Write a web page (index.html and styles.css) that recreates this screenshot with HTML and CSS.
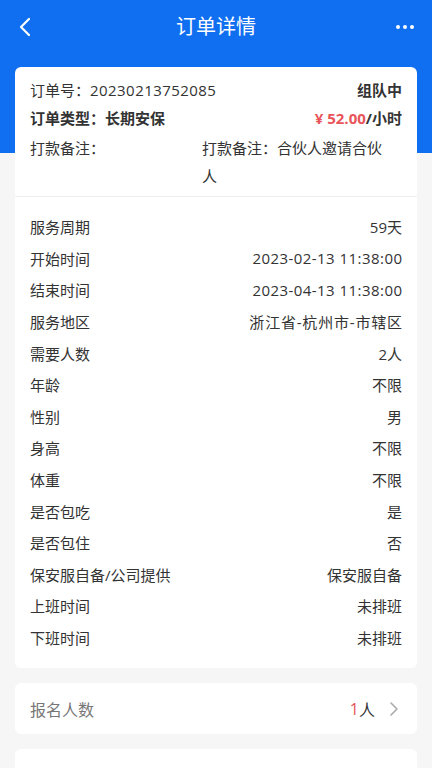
FILE: index.html
```html
<!DOCTYPE html>
<html lang="zh-CN">
<head>
<meta charset="utf-8">
<meta name="viewport" content="width=432">
<title>订单详情</title>
<link rel="stylesheet" href="styles.css">
</head>
<body>
<div class="page">
  <div class="header-bg"></div>
  <div class="nav">
    <div class="nav-back">
      <svg width="14" height="20" viewBox="0 0 14 20"><path d="M11 2 L3 10 L11 18" fill="none" stroke="#fff" stroke-width="2.2" stroke-linecap="round" stroke-linejoin="round"/></svg>
    </div>
    <div class="nav-title">订单详情</div>
    <div class="nav-more">
      <span class="dot"></span><span class="dot"></span><span class="dot"></span>
    </div>
  </div>

  <div class="content">
    <div class="card">
      <div class="summary">
        <div class="srow">
          <span>订单号：<span class="num">20230213752085</span></span>
          <span class="bold">组队中</span>
        </div>
        <div class="srow">
          <span class="bold">订单类型：长期安保</span>
          <span class="bold"><span class="price">¥ 52.00</span>/小时</span>
        </div>
        <div class="srow remark">
          <span class="remark-label">打款备注：</span>
          <span class="remark-value">打款备注：合伙人邀请合伙人</span>
        </div>
      </div>
      <div class="details">
        <div class="drow"><span>服务周期</span><span>59天</span></div>
        <div class="drow"><span>开始时间</span><span class="num">2023-02-13 11:38:00</span></div>
        <div class="drow"><span>结束时间</span><span class="num">2023-04-13 11:38:00</span></div>
        <div class="drow"><span>服务地区</span><span class="area">浙江省-杭州市-市辖区</span></div>
        <div class="drow"><span>需要人数</span><span>2人</span></div>
        <div class="drow"><span>年龄</span><span>不限</span></div>
        <div class="drow"><span>性别</span><span>男</span></div>
        <div class="drow"><span>身高</span><span>不限</span></div>
        <div class="drow"><span>体重</span><span>不限</span></div>
        <div class="drow"><span>是否包吃</span><span>是</span></div>
        <div class="drow"><span>是否包住</span><span>否</span></div>
        <div class="drow"><span>保安服自备/公司提供</span><span>保安服自备</span></div>
        <div class="drow"><span>上班时间</span><span>未排班</span></div>
        <div class="drow"><span>下班时间</span><span>未排班</span></div>
      </div>
    </div>

    <div class="card signup">
      <span class="signup-label">报名人数</span>
      <span class="signup-value"><span class="red">1</span>人
        <svg class="chev" width="10" height="16" viewBox="0 0 10 16"><path d="M2 2 L8 8 L2 14" fill="none" stroke="#aaa" stroke-width="1.6" stroke-linecap="round" stroke-linejoin="round"/></svg>
      </span>
    </div>

    <div class="card bottom-card"></div>
  </div>
</div>
</body>
</html>
```

FILE: styles.css
```css
* { box-sizing: border-box; }
html, body {
  margin: 0;
  padding: 0;
  background: #f6f6f6;
  font-family: "Open Sans", "Noto Sans CJK SC", "Noto Sans", sans-serif;
  color: #333;
  overflow: hidden;
}
.page {
  position: relative;
  width: 432px;
  height: 768px;
  overflow: hidden;
}
.header-bg {
  position: absolute;
  left: 0; top: 0;
  width: 100%;
  height: 153px;
  background: #0f6ff0;
}
.nav {
  position: relative;
  height: 54px;
  display: flex;
  align-items: center;
  justify-content: space-between;
  padding: 0 18px 0 18px;
  color: #fff;
}
.nav-back {
  width: 30px;
  display: flex;
  align-items: center;
}
.nav-title {
  font-size: 20px;
  line-height: 24px;
}
.nav-more {
  width: 30px;
  display: flex;
  justify-content: flex-end;
  gap: 3px;
}
.dot {
  width: 4px; height: 4px;
  border-radius: 50%;
  background: #fff;
}
.content {
  position: relative;
  padding: 13px 15px 0 15px;
  display: flex;
  flex-direction: column;
  gap: 15px;
}
.card {
  background: #fff;
  border-radius: 6px;
}
.summary {
  padding: 9px 15px 6px 15px;
  border-bottom: 1px solid #eeeeee;
  font-size: 15px;
}
.srow {
  display: flex;
  justify-content: space-between;
  align-items: flex-start;
  line-height: 28px;
}
.bold { font-weight: 700; }
.price { color: #e8545a; }
.num { letter-spacing: 0.45px; }
.area { letter-spacing: 0.8px; margin-right: -0.8px; }
.remark { justify-content: flex-start; margin-top: 2px; }
.remark-label { width: 172px; flex: 0 0 172px; }
.remark-value { width: 188px; }
.details {
  padding: 14px 15px 15px 15px;
  font-size: 15px;
}
.details .num { margin-right: -0.45px; }
.drow {
  display: flex;
  justify-content: space-between;
  align-items: center;
  height: 31.6px;
}
.signup {
  height: 51px;
  display: flex;
  align-items: center;
  justify-content: space-between;
  padding: 0 18px 0 15px;
  font-size: 16px;
}
.signup-label { color: #777; }
.signup-value {
  display: flex;
  align-items: center;
  color: #333;
}
.red { color: #e8545a; }
.chev { margin-left: 14px; }
.bottom-card { height: 60px; }
```
